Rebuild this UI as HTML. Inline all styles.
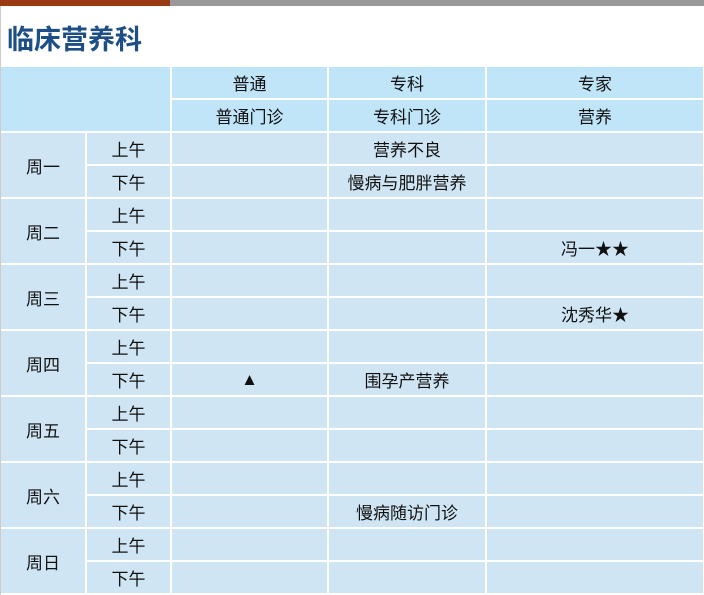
<!DOCTYPE html>
<html><head><meta charset="utf-8"><style>
body{margin:0;width:704px;height:595px;background:#fff;overflow:hidden;font-family:"Liberation Sans","Noto Sans CJK SC",sans-serif;position:relative}
.bar1{position:absolute;left:0;top:0;width:170px;height:6px;background:#9a3a12}
.bar2{position:absolute;left:170px;top:0;width:534px;height:6px;background:#999}
.lb{position:absolute;left:0;top:6px;width:1px;height:589px;background:#ccc}
h1{position:absolute;left:7px;top:18px;margin:0;font-size:27px;font-weight:bold;color:#1d4f86;letter-spacing:0}
.g{position:absolute;left:1px;top:67px;display:grid;grid-template-columns:84px 83px 155px 156px 216px;grid-auto-rows:31px;gap:2px;background:#fff}
.g div{background:#cfe5f3;display:flex;align-items:center;justify-content:center;font-size:17px;color:#111}
.g .h{background:#c1e5f8}
</style></head><body>
<div class="bar1"></div><div class="bar2"></div><div class="lb"></div>
<h1>临床营养科</h1>
<div class="g">
<div class="h" style="grid-column:1/3;grid-row:1/3"></div>
<div class="h">普通</div><div class="h">专科</div><div class="h">专家</div>
<div class="h">普通门诊</div><div class="h">专科门诊</div><div class="h">营养</div>

<div style="grid-row:span 2">周一</div><div>上午</div><div></div><div>营养不良</div><div></div>
<div>下午</div><div></div><div>慢病与肥胖营养</div><div></div>
<div style="grid-row:span 2">周二</div><div>上午</div><div></div><div></div><div></div>
<div>下午</div><div></div><div></div><div>冯一★★</div>
<div style="grid-row:span 2">周三</div><div>上午</div><div></div><div></div><div></div>
<div>下午</div><div></div><div></div><div>沈秀华★</div>
<div style="grid-row:span 2">周四</div><div>上午</div><div></div><div></div><div></div>
<div>下午</div><div>▲</div><div>围孕产营养</div><div></div>
<div style="grid-row:span 2">周五</div><div>上午</div><div></div><div></div><div></div>
<div>下午</div><div></div><div></div><div></div>
<div style="grid-row:span 2">周六</div><div>上午</div><div></div><div></div><div></div>
<div>下午</div><div></div><div>慢病随访门诊</div><div></div>
<div style="grid-row:span 2">周日</div><div>上午</div><div></div><div></div><div></div>
<div>下午</div><div></div><div></div><div></div>
</div>
</body></html>
